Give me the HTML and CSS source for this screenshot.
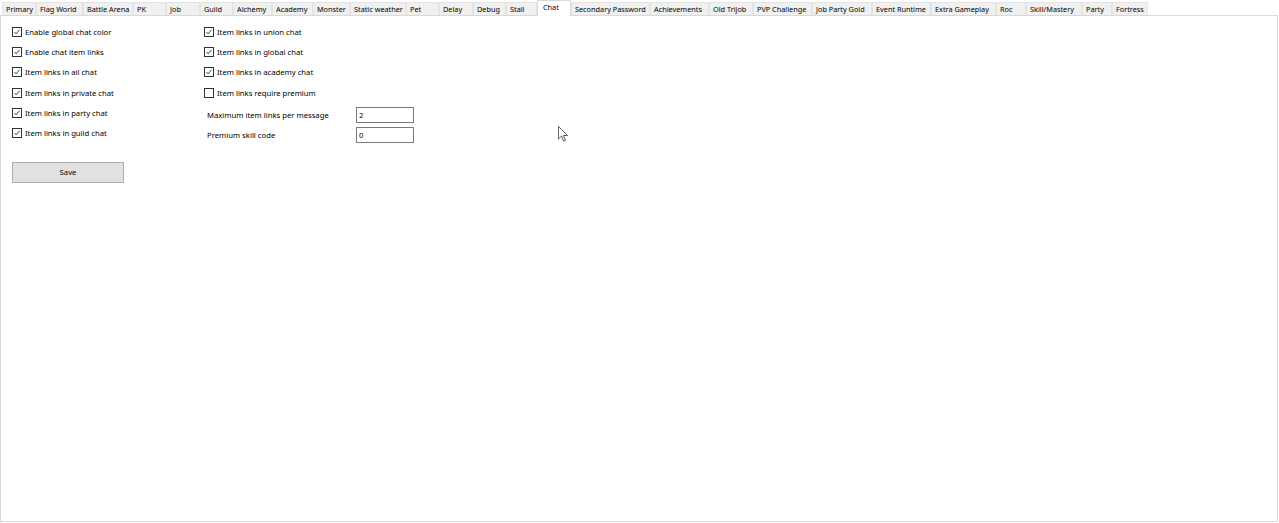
FILE: index.html
```html
<!DOCTYPE html>
<html lang="en">
<head>
  <meta charset="UTF-8">
  <title>Server Settings</title>
  <link rel="stylesheet" href="styles.css">
</head>
<body>
  <div class="tabstrip">
    <div class="tab">Primary</div>
    <div class="tab">Flag World</div>
    <div class="tab">Battle Arena</div>
    <div class="tab">PK</div>
    <div class="tab">Job</div>
    <div class="tab">Guild</div>
    <div class="tab">Alchemy</div>
    <div class="tab">Academy</div>
    <div class="tab">Monster</div>
    <div class="tab">Static weather</div>
    <div class="tab">Pet</div>
    <div class="tab">Delay</div>
    <div class="tab">Debug</div>
    <div class="tab">Stall</div>
    <div class="tab active">Chat</div>
    <div class="tab">Secondary Password</div>
    <div class="tab">Achievements</div>
    <div class="tab">Old Trijob</div>
    <div class="tab">PVP Challenge</div>
    <div class="tab">Job Party Gold</div>
    <div class="tab">Event Runtime</div>
    <div class="tab">Extra Gameplay</div>
    <div class="tab">Roc</div>
    <div class="tab">Skill/Mastery</div>
    <div class="tab">Party</div>
    <div class="tab">Fortress</div>
  </div>

  <div class="panel">
    <div class="columns">
      <div class="column first">
        <label class="check"><span class="box checked"><svg viewBox="0 0 11 11"><polyline points="2,5.5 4.3,8 9,2.5"/></svg></span>Enable global chat color</label>
        <label class="check"><span class="box checked"><svg viewBox="0 0 11 11"><polyline points="2,5.5 4.3,8 9,2.5"/></svg></span>Enable chat item links</label>
        <label class="check"><span class="box checked"><svg viewBox="0 0 11 11"><polyline points="2,5.5 4.3,8 9,2.5"/></svg></span>Item links in all chat</label>
        <label class="check"><span class="box checked"><svg viewBox="0 0 11 11"><polyline points="2,5.5 4.3,8 9,2.5"/></svg></span>Item links in private chat</label>
        <label class="check"><span class="box checked"><svg viewBox="0 0 11 11"><polyline points="2,5.5 4.3,8 9,2.5"/></svg></span>Item links in party chat</label>
        <label class="check"><span class="box checked"><svg viewBox="0 0 11 11"><polyline points="2,5.5 4.3,8 9,2.5"/></svg></span>Item links in guild chat</label>
      </div>

      <div class="column">
        <label class="check"><span class="box checked"><svg viewBox="0 0 11 11"><polyline points="2,5.5 4.3,8 9,2.5"/></svg></span>Item links in union chat</label>
        <label class="check"><span class="box checked"><svg viewBox="0 0 11 11"><polyline points="2,5.5 4.3,8 9,2.5"/></svg></span>Item links in global chat</label>
        <label class="check"><span class="box checked"><svg viewBox="0 0 11 11"><polyline points="2,5.5 4.3,8 9,2.5"/></svg></span>Item links in academy chat</label>
        <label class="check"><span class="box"></span>Item links require premium</label>

        <div class="fields">
          <div class="field">
            <span class="field-label">Maximum item links per message</span>
            <input class="textbox" type="text" value="2">
          </div>
          <div class="field">
            <span class="field-label">Premium skill code</span>
            <input class="textbox" type="text" value="0">
          </div>
        </div>
      </div>
    </div>

    <button class="save">Save</button>

    <!-- mouse pointer resting over the panel -->
    <svg class="pointer" width="10" height="16" viewBox="0 0 12 19">
      <path d="M0.5 0.5 L0.5 15.5 L4.2 12 L6.8 18 L9 17 L6.5 11.3 L11.5 11.3 Z"/>
    </svg>
  </div>
</body>
</html>
```

FILE: styles.css
```css
body {
  font-family: "Noto Sans", "Open Sans", sans-serif;
  font-size: 7.7px;
  margin: 0;
  padding: 0;
  background-color: #ffffff;
  color: #000000;
}

/* tab headers */
.tabstrip {
  display: grid;
  grid-template-columns: 34px 47px 50px 33px 34px 33px 39px 41px 37px 56px 33px 34px 33px 31px 34px 79px 59px 44px 59px 60px 59px 65px 30px 56px 30px 36px;
  align-items: end;
  height: 15px;
  padding-left: 2px;
  font-size: 7.3px;
}

.tab {
  box-sizing: border-box;
  height: 13px;
  line-height: 12px;
  padding-left: 3px;
  background-color: #f0f0f0;
  border: 1px solid #e4e4e4;
  border-bottom: none;
  white-space: nowrap;
  overflow: hidden;
}

.tab.active {
  position: relative;
  z-index: 1;
  height: 16px;
  margin-bottom: -1px;
  line-height: 13px;
  padding-left: 5px;
  background-color: #ffffff;
  border-color: #d9d9d9;
}

/* tab page */
.panel {
  position: relative;
  box-sizing: border-box;
  width: 1278px;
  height: 507px;
  border: 1px solid #d9d9d9;
  padding: 6px 0 0 11px;
}

.columns {
  display: grid;
  grid-template-columns: 192px auto;
}

.column {
  display: flex;
  flex-direction: column;
}

.check {
  display: flex;
  align-items: center;
  gap: 3px;
  height: 20.2px;
}

.box {
  box-sizing: border-box;
  width: 10px;
  height: 10px;
  border: 1px solid #333333;
  background-color: #ffffff;
  display: flex;
}

.box svg {
  width: 8px;
  height: 8px;
  fill: none;
  stroke: #222222;
  stroke-width: 1.2;
}

.fields {
  margin-top: 2px;
  padding-left: 3px;
}

.field {
  display: flex;
  align-items: center;
  height: 20px;
}

.field-label {
  width: 149px;
}

.textbox {
  box-sizing: border-box;
  width: 58px;
  height: 16px;
  border: 1px solid #7a7a7a;
  padding: 0 2px;
  font-family: inherit;
  font-size: 7.7px;
  color: #000000;
  outline: none;
}

.save {
  display: block;
  box-sizing: border-box;
  margin-top: 17px;
  width: 112px;
  height: 21px;
  background-color: #e1e1e1;
  border: 1px solid #adadad;
  font-family: inherit;
  font-size: 7.7px;
  color: #000000;
  padding: 0;
}

.pointer {
  position: absolute;
  left: 557px;
  top: 110px;
  fill: #ffffff;
  stroke: #3a3a3a;
  stroke-width: 1;
}
```
